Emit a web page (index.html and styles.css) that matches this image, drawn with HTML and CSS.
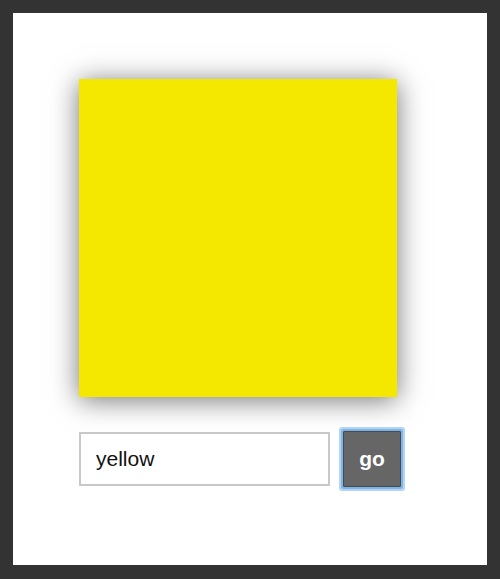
FILE: index.html
```html
<!DOCTYPE html>
<html>
<head>
<meta charset="utf-8">
<link rel="stylesheet" href="styles.css">
</head>
<body>
<div class="panel">
  <div class="square"></div>
  <div class="row">
    <input class="field" type="text" value="yellow">
    <button class="go">go</button>
  </div>
</div>
</body>
</html>
```
FILE: styles.css
```css
html, body {
  margin: 0;
  padding: 0;
  background: #333333;
}
body {
  width: 500px;
  height: 579px;
  padding: 13px;
  box-sizing: border-box;
}
.panel {
  background: #ffffff;
  width: 474px;
  height: 552px;
  box-sizing: border-box;
  padding: 66px 0 0 66px;
}
.square {
  width: 318px;
  height: 318px;
  background: #f4e800;
  box-shadow: 0 3px 26px rgba(0, 0, 0, 0.55);
}
.row {
  display: flex;
  align-items: center;
  gap: 13px;
  margin-top: 34px;
}
.field {
  width: 251px;
  height: 54px;
  box-sizing: border-box;
  border: 2px solid #c8c8c8;
  padding: 0 0 0 15px;
  margin: 0;
  font-family: "Liberation Sans", Arial, sans-serif;
  font-size: 21px;
  color: #111;
  outline: none;
}
.go {
  width: 58px;
  height: 56px;
  box-sizing: border-box;
  margin: 0;
  padding: 0;
  background: #666666;
  border: 1px solid #4a4a4a;
  border-radius: 1px;
  color: #ffffff;
  font-family: "Liberation Sans", Arial, sans-serif;
  font-weight: bold;
  font-size: 21px;
  box-shadow: 0 0 0 2px #7db4ea, 0 0 0 4px #b3d4f4;
}
```
